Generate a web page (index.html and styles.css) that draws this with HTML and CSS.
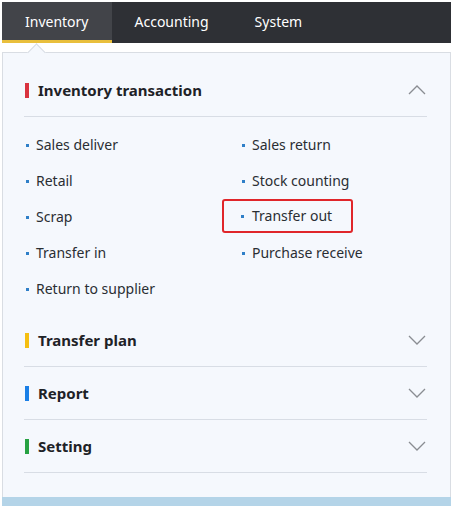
FILE: index.html
```html
<!DOCTYPE html>
<html lang="en">
<head>
  <meta charset="UTF-8" />
  <title>Menu</title>
  <link rel="stylesheet" href="styles.css">
</head>
<body>
  <div class="app">
    <nav class="topbar">
      <a class="tab active">Inventory</a>
      <a class="tab">Accounting</a>
      <a class="tab">System</a>
    </nav>

    <div class="panel">
      <section class="group">
        <div class="group-head">
          <span class="mark red"></span>
          <span class="title">Inventory transaction</span>
          <svg class="chev" width="18" height="10" viewBox="0 0 18 10"><path d="M1 9 L9 1 L17 9" fill="none" stroke="#8a8d92" stroke-width="1.3"/></svg>
        </div>
        <ul class="items">
          <li>Sales deliver</li>
          <li>Sales return</li>
          <li>Retail</li>
          <li>Stock counting</li>
          <li>Scrap</li>
          <li class="marked">Transfer out</li>
          <li>Transfer in</li>
          <li>Purchase receive</li>
          <li>Return to supplier</li>
        </ul>
      </section>

      <section class="group">
        <div class="group-head">
          <span class="mark yellow"></span>
          <span class="title">Transfer plan</span>
          <svg class="chev" width="18" height="10" viewBox="0 0 18 10"><path d="M1 1 L9 9 L17 1" fill="none" stroke="#8a8d92" stroke-width="1.3"/></svg>
        </div>
      </section>

      <section class="group">
        <div class="group-head">
          <span class="mark blue"></span>
          <span class="title">Report</span>
          <svg class="chev" width="18" height="10" viewBox="0 0 18 10"><path d="M1 1 L9 9 L17 1" fill="none" stroke="#8a8d92" stroke-width="1.3"/></svg>
        </div>
      </section>

      <section class="group">
        <div class="group-head">
          <span class="mark green"></span>
          <span class="title">Setting</span>
          <svg class="chev" width="18" height="10" viewBox="0 0 18 10"><path d="M1 1 L9 9 L17 1" fill="none" stroke="#8a8d92" stroke-width="1.3"/></svg>
        </div>
      </section>
    </div>
    <div class="footer-strip"></div>
  </div>
</body>
</html>
```

FILE: styles.css
```css
body {
  margin: 0;
  background: #fff;
  font-family: "Noto Sans", "Open Sans", sans-serif;
}
.app {
  margin: 2px 0 0 2px;
  width: 449px;
}
.topbar {
  display: flex;
  height: 41px;
  background: #2e3035;
}
.tab {
  display: flex;
  align-items: center;
  padding: 0 23px;
  color: #fff;
  font-size: 14px;
  border-bottom: 3px solid transparent;
}
.tab.active {
  background: #424449;
  border-bottom-color: #e9bf3c;
}
.panel {
  position: relative;
  margin-top: 9px;
  background: #f5f8fd;
  border: 1px solid #d9dde3;
  border-bottom: none;
  padding: 11px 23px 24px 21px;
}
.panel::before {
  content: "";
  position: absolute;
  left: 27px;
  top: -7px;
  width: 12px;
  height: 12px;
  background: #f5f8fd;
  border-left: 1px solid #d9dde3;
  border-top: 1px solid #d9dde3;
  transform: rotate(45deg);
}
.group-head {
  display: flex;
  align-items: center;
  height: 52px;
  border-bottom: 1px solid #d8dde5;
}
.mark {
  width: 4px;
  height: 15px;
  margin: 0 9px 0 1px;
}
.mark.red { background: #d9333f; }
.mark.yellow { background: #f5bf12; }
.mark.blue { background: #1a7fe6; }
.mark.green { background: #27a243; }
.title {
  flex: 1;
  font-size: 15px;
  font-weight: bold;
  color: #1e2227;
}
.chev {
  margin-right: 1px;
}
.items {
  list-style: none;
  margin: 0;
  padding: 10px 0 7px 0;
  display: grid;
  grid-template-columns: 216px 1fr;
}
.items li {
  position: relative;
  height: 36px;
  line-height: 36px;
  padding-left: 12px;
  font-size: 14px;
  color: #2a2e33;
}
.items li::before {
  content: "";
  position: absolute;
  left: 2px;
  top: 17px;
  width: 3px;
  height: 3px;
  background: #2f7fc8;
}
.items li.marked {
  box-sizing: border-box;
  width: 131px;
  height: 34px;
  line-height: 30px;
  margin-left: -18px;
  padding-left: 28px;
  border: 2px solid #e0262a;
  border-radius: 3px;
}
.items li.marked::before {
  left: 17px;
  top: 14px;
}
.footer-strip {
  height: 10px;
  background: #b4d4e8;
}
```
